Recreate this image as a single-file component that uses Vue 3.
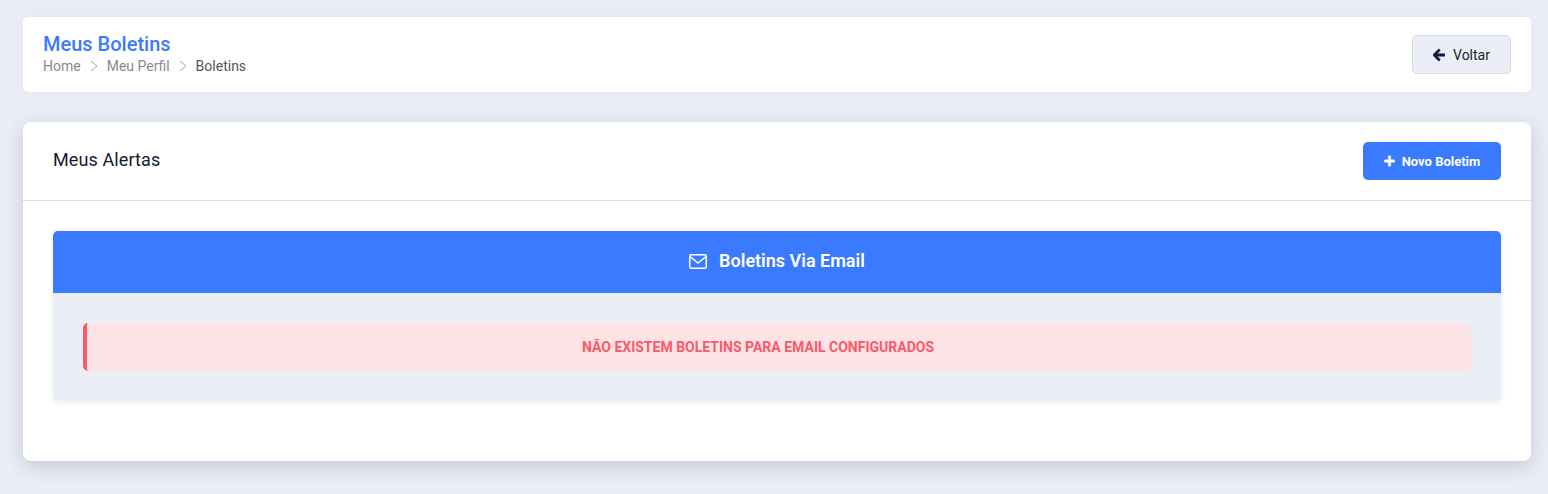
<template>
  <div class="page">
    <div class="page-header">
      <div class="heading">
        <h1 class="page-title">Meus Boletins</h1>
        <nav class="crumbs">
          <span>Home</span>
          <svg class="crumb-sep" viewBox="0 0 8 12"><path d="M1 1l6 5-6 5" /></svg>
          <span>Meu Perfil</span>
          <svg class="crumb-sep" viewBox="0 0 8 12"><path d="M1 1l6 5-6 5" /></svg>
          <span class="current">Boletins</span>
        </nav>
      </div>
      <button type="button" class="btn-back">
        <svg class="icon-back" viewBox="0 0 448 512"><path d="M257.5 445.1l-22.2 22.2c-9.4 9.4-24.6 9.4-33.9 0L7 273c-9.4-9.4-9.4-24.6 0-33.9L201.4 44.7c9.4-9.4 24.6-9.4 33.9 0l22.2 22.2c9.5 9.5 9.3 25-.4 34.3L136.6 216H424c13.3 0 24 10.7 24 24v32c0 13.3-10.7 24-24 24H136.6l120.5 114.8c9.8 9.3 10 24.8.4 34.3z" /></svg>
        Voltar
      </button>
    </div>

    <div class="card">
      <div class="card-head">
        <h2 class="card-title">Meus Alertas</h2>
        <button type="button" class="btn-new">
          <svg class="icon-plus" viewBox="0 0 448 512"><path d="M416 208H272V64c0-17.67-14.33-32-32-32h-32c-17.67 0-32 14.33-32 32v144H32c-17.67 0-32 14.33-32 32v32c0 17.67 14.33 32 32 32h144v144c0 17.67 14.33 32 32 32h32c17.67 0 32-14.33 32-32V304h144c17.67 0 32-14.33 32-32v-32c0-17.67-14.33-32-32-32z" /></svg>
          Novo Boletim
        </button>
      </div>
      <div class="card-body">
        <div class="panel">
          <div class="panel-head">
            <svg class="icon-mail" viewBox="0 0 18 15">
              <rect x="0.75" y="0.75" width="16.5" height="13.5" rx="1.5" />
              <path d="M1 2.5l8 6.5 8-6.5" />
            </svg>
            <span>Boletins Via Email</span>
          </div>
          <div class="panel-body">
            <div class="alert">NÃO EXISTEM BOLETINS PARA EMAIL CONFIGURADOS</div>
          </div>
        </div>
      </div>
    </div>
  </div>
</template>

<script setup>
</script>

<style>
html, body { background: #ebeef7; }
</style>

<style scoped>
.page {
  box-sizing: border-box;
  height: 494px;
  padding: 17px 17px 0 23px;
  background: #ebeef7;
  font-family: Roboto, "Liberation Sans", sans-serif;
  overflow: hidden;
}

.page-header {
  display: flex;
  justify-content: space-between;
  align-items: center;
  height: 75px;
  padding: 0 20px;
  box-sizing: border-box;
  background: #fff;
  border-radius: 5px;
  box-shadow: 0 0 24px rgba(30, 40, 80, 0.04);
}

.heading { margin-bottom: 2px; }

.page-title {
  margin: -1px 0 1px;
  font-size: 20px;
  line-height: 24px;
  font-weight: 500;
  color: #3a7afe;
}

.crumbs {
  display: flex;
  align-items: center;
  height: 18px;
  font-size: 14px;
  color: #8a8a8a;
}

.crumbs .current { color: #555; }

.crumb-sep {
  width: 8px;
  height: 12px;
  margin: 0 9px;
  fill: none;
  stroke: #a5a5a5;
  stroke-width: 1;
}

.btn-back {
  display: flex;
  align-items: center;
  justify-content: center;
  width: 99px;
  height: 39px;
  padding: 0;
  border: 1px solid #d8dbe6;
  border-radius: 5px;
  background: #ebeef7;
  color: #1a1d2e;
  font: 400 14px Roboto, sans-serif;
}

.icon-back {
  width: 12px;
  height: 14px;
  margin-right: 8px;
  fill: #141a33;
  stroke: #141a33;
  stroke-width: 36;
}

.card {
  margin-top: 30px;
  height: 339px;
  background: #fff;
  border-radius: 8px;
  box-shadow: 0 5px 20px rgba(30, 40, 80, 0.2);
}

.card-head {
  display: flex;
  justify-content: space-between;
  align-items: center;
  box-sizing: border-box;
  height: 79px;
  padding: 0 30px;
  border-bottom: 1px solid #d8dbe6;
}

.card-title {
  margin: 0 0 4px;
  font-size: 18px;
  font-weight: 400;
  letter-spacing: 0.1px;
  color: #141a33;
}

.btn-new {
  display: flex;
  align-items: center;
  justify-content: center;
  width: 138px;
  height: 38px;
  padding: 0;
  border: none;
  border-radius: 5px;
  background: #3a7afe;
  color: #fff;
  font: 700 13px Roboto, sans-serif;
}

.icon-plus {
  width: 11px;
  height: 12px;
  margin-right: 7px;
  fill: #fff;
  stroke: #fff;
  stroke-width: 30;
}

.card-body { padding: 30px; }

.panel {
  border-radius: 5px;
  background: #ebeef7;
  box-shadow: 0 2px 6px rgba(30, 40, 80, 0.08);
}

.panel-head {
  display: flex;
  align-items: center;
  justify-content: center;
  box-sizing: border-box;
  height: 62px;
  padding-bottom: 4px;
  border-radius: 5px 5px 0 0;
  background: #3a7afe;
  color: #fff;
  font-size: 18px;
  font-weight: 600;
}

.icon-mail {
  width: 18px;
  height: 15px;
  margin: 3px 12px 0 0;
  fill: none;
  stroke: #fff;
  stroke-width: 1.5;
}

.panel-body { padding: 30px; }

.alert {
  box-sizing: border-box;
  height: 48px;
  line-height: 48px;
  padding-right: 42px;
  text-align: center;
  border-left: 4px solid #f95a69;
  border-radius: 5px;
  background: #fde3e6;
  color: #f95a69;
  font-size: 14px;
  font-weight: 700;
}
</style>
